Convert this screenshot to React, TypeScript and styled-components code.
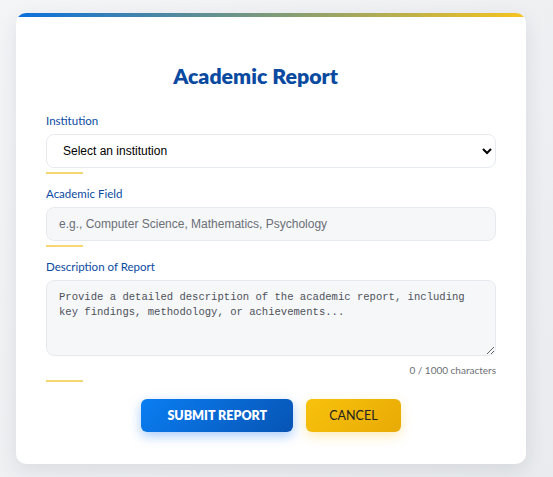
import React, { useState } from "react";
import styled, { createGlobalStyle } from "styled-components";

const GlobalStyle = createGlobalStyle`
  html, body {
    margin: 0;
    padding: 0;
  }
  body {
    min-height: 100vh;
    background: linear-gradient(135deg, #f4f5f7 0%, #e9ebee 100%);
    font-family: Lato, "Open Sans", sans-serif;
  }
`;

const Page = styled.div`
  padding: 13px 27px 14px 16px;
  box-sizing: border-box;
`;

const Card = styled.form`
  background: #fff;
  border-radius: 10px;
  overflow: hidden;
  box-shadow: 0 6px 20px rgba(30, 40, 60, 0.1);
`;

const TopBar = styled.div`
  height: 4px;
  background: linear-gradient(90deg, #0a6fdc 0%, #7d9a7a 50%, #f6c41e 100%);
`;

const Body = styled.div`
  padding: 45px 30px 32px;
  display: flex;
  flex-direction: column;
`;

const Title = styled.h1`
  margin: 0 0 24px;
  padding-right: 31px;
  text-align: center;
  font-size: 21.3px;
  font-weight: 800;
  color: #0a4aa0;
  line-height: 28px;
`;

const Field = styled.div`
  display: flex;
  flex-direction: column;
  margin-bottom: 13px;
`;

const Label = styled.label`
  font-size: 11.5px;
  color: #0a4aa0;
  line-height: 14px;
  margin-bottom: 6px;
`;

const baseControl = `
  box-sizing: border-box;
  width: 100%;
  border: 1px solid #e6e9ee;
  border-radius: 8px;
  outline: none;
`;

const Select = styled.select`
  ${baseControl}
  height: 34px;
  padding: 0 10px 0 12px;
  background: #fff;
  font-family: "Liberation Sans", Arial, sans-serif;
  font-size: 12px;
  color: #000;
`;

const TextInput = styled.input`
  ${baseControl}
  height: 34px;
  padding: 0 12px;
  background: #f6f7f9;
  font-family: "Liberation Sans", Arial, sans-serif;
  font-size: 12px;
  color: #333;
  &::placeholder {
    color: #6b6f76;
  }
`;

const TextArea = styled.textarea`
  ${baseControl}
  height: 76px;
  padding: 9px 12px;
  background: #f6f7f9;
  font-family: "Liberation Mono", "DejaVu Sans Mono", monospace;
  font-size: 10.57px;
  line-height: 15px;
  color: #333;
  resize: vertical;
  &::placeholder {
    color: #4d5259;
  }
`;

const Counter = styled.div`
  text-align: right;
  font-size: 10px;
  color: #6b6f76;
  margin-top: 8px;
  line-height: 12px;
`;

const Accent = styled.div`
  width: 37px;
  height: 2px;
  background: #f7d774;
  margin-top: 4px;
`;

const Actions = styled.div`
  display: flex;
  justify-content: center;
  gap: 13px;
  margin-top: 4px;
`;

const Button = styled.button<{ $variant: "primary" | "secondary" }>`
  height: 33px;
  border: none;
  border-radius: 6px;
  font-family: Lato, "Open Sans", sans-serif;
  font-size: 12.5px;
  text-transform: uppercase;
  cursor: pointer;
  ${(p) =>
    p.$variant === "primary"
      ? `
    padding: 0 26px;
    background: linear-gradient(135deg, #0a7ef2 0%, #0754b4 100%);
    color: #fff;
    font-weight: 800;
    box-shadow: 0 4px 12px rgba(10, 110, 240, 0.35);
  `
      : `
    padding: 0 23px;
    background: linear-gradient(135deg, #f8c20c 0%, #e8aa05 100%);
    color: #222;
    font-weight: 400;
    box-shadow: 0 4px 12px rgba(245, 190, 20, 0.3);
  `}
`;

export default function App() {
  const [desc, setDesc] = useState("");
  return (
    <>
      <GlobalStyle />
      <Page>
        <Card onSubmit={(e) => e.preventDefault()}>
          <TopBar />
          <Body>
            <Title>Academic Report</Title>
            <Field>
              <Label>Institution</Label>
              <Select defaultValue="">
                <option value="">Select an institution</option>
              </Select>
              <Accent />
            </Field>
            <Field>
              <Label>Academic Field</Label>
              <TextInput placeholder="e.g., Computer Science, Mathematics, Psychology" />
              <Accent />
            </Field>
            <Field>
              <Label>Description of Report</Label>
              <TextArea
                value={desc}
                onChange={(e) => setDesc(e.target.value)}
                placeholder="Provide a detailed description of the academic report, including key findings, methodology, or achievements..."
              />
              <Counter>{desc.length} / 1000 characters</Counter>
              <Accent />
            </Field>
            <Actions>
              <Button $variant="primary" type="submit">Submit Report</Button>
              <Button $variant="secondary" type="button">Cancel</Button>
            </Actions>
          </Body>
        </Card>
      </Page>
    </>
  );
}
